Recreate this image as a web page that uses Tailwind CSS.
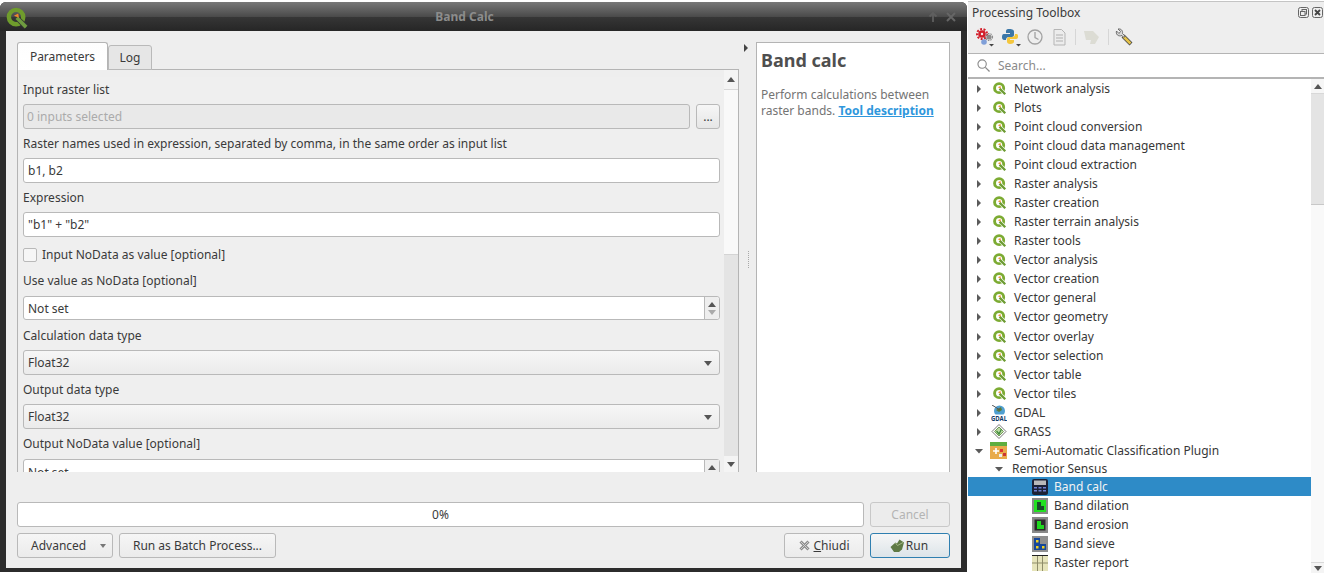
<!DOCTYPE html>
<html><head><script src="https://cdn.jsdelivr.net/npm/@tailwindcss/browser@4"></script></head>
<body class="w-[1324px] h-[573px] overflow-hidden bg-white font-['Noto_Sans',sans-serif] text-[12px] text-[#3a3a3a]">
<svg width="0" height="0" class="absolute"><defs>
  <symbol id="q" viewBox="0 0 16 16"><circle cx="7" cy="7" r="5.200" fill="none" stroke="#7cab32" stroke-width="3.300"/><path d="M7.500 7.500l6.500 6.500" stroke="#fff" stroke-width="4"/><path d="M7.500 7.500l6.500 6.500" stroke="#6d9c34" stroke-width="2.700"/><path d="M5.500 6l3-1.500.5 3z" fill="#f08a2c"/></symbol>
  <symbol id="a" viewBox="0 0 8 10"><path d="M2 1l4 4-4 4z" fill="#5a5a5a"/></symbol>
</defs></svg>
<div class="flex h-[573px]">
  <!-- Dialog window -->
  <div class="w-[967px] h-[573px] pt-[2px] shrink-0">
    <div class="h-[570px] flex flex-col bg-[#2c2c2c] rounded-t-[6px] overflow-hidden">
      <div class="h-[29px] shrink-0 relative flex items-center justify-center pr-[38px] bg-[linear-gradient(#787878,#494949_52%,#363636_52%,#262626)] font-bold text-[#8c8c8c]">
        <svg class="absolute left-[6px] top-[5px]" width="23" height="23" viewBox="0 0 16 16"><circle cx="7" cy="7" r="5" fill="none" stroke="#6f9c2c" stroke-width="3.100"/><path d="M7.500 7.500l6.500 6.500" stroke="#333" stroke-width="3.600"/><path d="M7.500 7.500l6.500 6.500" stroke="#6f9c40" stroke-width="2.500"/><path d="M5.500 6l3-1.500.5 3z" fill="#ef862b"/></svg>
        <span>Band Calc</span>
        <svg class="absolute left-[928px] top-[9px]" width="28" height="12" viewBox="0 0 28 12"><path d="M5 11V2M1.500 5.500L5 2l3.500 3.500" fill="none" stroke="#5f5f5f" stroke-width="1.800"/><path d="M19 2l8 8M27 2l-8 8" stroke="#666" stroke-width="2"/></svg>
      </div>
      <div class="mx-[6px] h-[537px] shrink-0 bg-[#eeeeee] pt-[11px] px-[11px] flex flex-col">
        <div class="flex h-[430px] shrink-0">
          <!-- left -->
          <div class="w-[722px] flex flex-col">
            <div class="flex h-[28px] items-end relative z-10">
              <div class="w-[91px] h-[28px] bg-[linear-gradient(#fdfdfd,#ffffff)] border border-[#b4b4b4] border-b-0 rounded-t-[3px] flex items-center justify-center">Parameters</div>
              <div class="w-[44px] h-[25px] bg-[#e6e6e6] border border-[#b9b9b9] rounded-t-[3px] flex items-center justify-center">Log</div>
            </div>
            <div class="h-[403px] -mt-[1px] border-x border-t border-[#b4b4b4] pt-[7px] pl-[1px] bg-[#eeeeee] flex">
              <div class="flex-1 min-w-0 pl-[4px] pr-[4px] overflow-hidden bg-[#efefef]">
                <div class="h-[27px] pb-[2px] flex items-center">Input raster list</div>
                <div class="flex gap-[6px] h-[25px]">
                  <div class="flex-1 border border-[#b9b9b9] rounded-[3px] bg-[#e9e9e9] text-[#ababab] pl-[3px] pt-[1px] flex items-center">0 inputs selected</div>
                  <div class="w-[24px] border border-[#b9b9b9] rounded-[3px] bg-gradient-to-b from-[#f6f6f6] to-[#e6e6e6] flex items-center justify-center">...</div>
                </div>
                <div class="h-[29px] flex items-center">Raster names used in expression, separated by comma, in the same order as input list</div>
                <div class="h-[25px] border border-[#b9b9b9] rounded-[3px] bg-white pl-[4px] pt-[1px] flex items-center">b1, b2</div>
                <div class="h-[29px] flex items-center">Expression</div>
                <div class="h-[25px] border border-[#b9b9b9] rounded-[3px] bg-white pl-[4px] pt-[1px] flex items-center">"b1" + "b2"</div>
                <div class="h-[33px] pt-[2px] flex items-center gap-[5px]"><span class="w-[14px] h-[14px] border border-[#b9b9b9] rounded-[2px] bg-[#f6f6f6]"></span><span>Input NoData as value [optional]</span></div>
                <div class="h-[26px] pb-[4px] flex items-center">Use value as NoData [optional]</div>
                <div class="h-[24px] pt-[1px] border border-[#b9b9b9] rounded-[3px] bg-white pl-[4px] flex items-center relative">Not set
                  <span class="absolute right-0 top-0 bottom-0 w-[15px] border-l border-[#b9b9b9] bg-[#eeeeee] rounded-r-[3px] flex flex-col items-center justify-center gap-[3px]"><span class="w-0 h-0 border-x-[4px] border-x-transparent border-b-[5px] border-b-[#555]"></span><span class="w-0 h-0 border-x-[4px] border-x-transparent border-t-[5px] border-t-[#aaa]"></span></span></div>
                <div class="h-[30px] pt-[2px] flex items-center">Calculation data type</div>
                <div class="h-[25px] border border-[#b9b9b9] rounded-[3px] bg-gradient-to-b from-[#f6f6f6] to-[#ebebeb] pl-[4px] flex items-center relative">Float32<span class="absolute right-[7px] top-[10px] w-0 h-0 border-x-[4px] border-x-transparent border-t-[5px] border-t-[#555]"></span></div>
                <div class="h-[29px] flex items-center">Output data type</div>
                <div class="h-[25px] border border-[#b9b9b9] rounded-[3px] bg-gradient-to-b from-[#f6f6f6] to-[#ebebeb] pl-[4px] flex items-center relative">Float32<span class="absolute right-[7px] top-[10px] w-0 h-0 border-x-[4px] border-x-transparent border-t-[5px] border-t-[#555]"></span></div>
                <div class="h-[30px] flex items-center">Output NoData value [optional]</div>
                <div class="h-[25px] pt-[2px] border border-[#b9b9b9] rounded-[3px] bg-white pl-[4px] flex items-center relative">Not set
                  <span class="absolute right-0 top-0 bottom-0 w-[15px] border-l border-[#b9b9b9] bg-[#eeeeee] flex flex-col items-center pt-[5px]"><span class="w-0 h-0 border-x-[4px] border-x-transparent border-b-[5px] border-b-[#555]"></span></span></div>
              </div>
              <div class="w-[14px] shrink-0 flex flex-col bg-[#e4e4e4] -mt-[7px]">
                <div class="h-[20px] bg-[#f4f4f4] border-b border-[#d8d8d8] flex items-center justify-center"><span class="w-0 h-0 border-x-[4px] border-x-transparent border-b-[5px] border-b-[#555]"></span></div>
                <div class="h-[165px] bg-[#f9f9f9] border-b border-[#d4d4d4]"></div>
                <div class="flex-1"></div>
                <div class="h-[16px] bg-[#f4f4f4] flex items-center justify-center"><span class="w-0 h-0 border-x-[4px] border-x-transparent border-t-[5px] border-t-[#555]"></span></div>
              </div>
            </div>
          </div>
          <!-- splitter -->
          <div class="w-[17px] shrink-0 relative">
            <span class="absolute left-[5px] top-[2px] w-0 h-0 border-y-[4px] border-y-transparent border-l-[4px] border-l-[#444]"></span>
            <span class="absolute left-[9px] top-[209px] h-[17px] border-l border-dotted border-[#a8a8a8]"></span>
          </div>
          <!-- help -->
          <div class="w-[194px] bg-white border-x border-t border-[#b4b4b4] pl-[4px] text-[#747474] leading-[16px]">
            <div class="text-[18px] font-bold text-[#4f4f4f] leading-[24px] mt-[5px] mb-[15px]">Band calc</div>
            <div>Perform calculations between raster bands. <a class="font-bold text-[#2f97dc] underline">Tool description</a></div>
          </div>
        </div>
        <div class="flex gap-[6px] mt-[30px] h-[25px] shrink-0">
          <div class="flex-1 border border-[#b9b9b9] rounded-[3px] bg-white flex items-center justify-center">0%</div>
          <div class="w-[80px] border border-[#c8c8c8] rounded-[3px] bg-[#ececec] text-[#b4b4b4] flex items-center justify-center">Cancel</div>
        </div>
        <div class="flex mt-[6px] h-[25px] shrink-0">
          <div class="w-[96px] border border-[#b9b9b9] rounded-[3px] bg-gradient-to-b from-[#f6f6f6] to-[#ebebeb] relative flex items-center pl-[13px]">Advanced<span class="absolute right-[6px] top-[10px] w-0 h-0 border-x-[3px] border-x-transparent border-t-[4px] border-t-[#777]"></span></div>
          <div class="w-[157px] ml-[6px] border border-[#b9b9b9] rounded-[3px] bg-gradient-to-b from-[#f6f6f6] to-[#ebebeb] flex items-center justify-center">Run as Batch Process...</div>
          <div class="flex-1"></div>
          <div class="w-[80px] border border-[#b9b9b9] rounded-[3px] bg-gradient-to-b from-[#f6f6f6] to-[#ebebeb] flex items-center justify-center gap-[4px]"><svg width="11" height="11" viewBox="0 0 11 11"><path d="M1.500 1.500l8 8M9.500 1.500l-8 8" stroke="#8c8c8c" stroke-width="3"/><path d="M1.500 1.500l8 8M9.500 1.500l-8 8" stroke="#cfcfcf" stroke-width="1"/></svg><span><span class="underline">C</span>hiudi</span></div>
          <div class="w-[80px] ml-[6px] pr-[2px] border border-[#2f7fb0] rounded-[3px] bg-gradient-to-b from-[#f6f6f6] to-[#dce4e9] flex items-center justify-center gap-[1px]"><svg width="15" height="14" viewBox="0 0 15 14"><path d="M.5 8l5-4.500 1.500 1 2.500-4 4.500 3-2 7-3 2.500H4z" fill="#5f7a45"/><path d="M5.500 4l2 2.500 5.500-3" stroke="#a4b985" fill="none"/></svg><span>Run</span></div>
        </div>
      </div>
    </div>
  </div>
  <div class="w-px shrink-0"></div>
  <!-- Toolbox -->
  <div class="flex-1 min-w-0 flex flex-col">
    <div class="h-[53px] shrink-0 border-t border-[#c4c4c4] mt-[1px] bg-[#eeeeee] border-b border-b-[#b4b4b4]">
    <div class="h-[22px] pl-[4px] flex items-center relative">Processing Toolbox
      <span class="absolute right-[1px] top-[5px] flex gap-[3px]">
        <svg width="11" height="11" viewBox="0 0 11 11"><rect x=".5" y=".5" width="10" height="10" rx="2" fill="none" stroke="#666"/><rect x="4" y="2.500" width="4.500" height="4.500" fill="none" stroke="#666"/><rect x="2.500" y="4.500" width="4.500" height="4" fill="#eee" stroke="#666"/></svg>
        <svg width="11" height="11" viewBox="0 0 11 11"><rect x=".5" y=".5" width="10" height="10" rx="2" fill="none" stroke="#666"/><path d="M3 3l5 5M8 3l-5 5" stroke="#444" stroke-width="1.800"/></svg>
      </span>
    </div>
    <div class="h-[26px] pl-[8px] flex items-center">
      <svg width="19" height="19" viewBox="0 0 19 19"><circle cx="6" cy="6" r="3.800" fill="#d21e2a"/><circle cx="6" cy="6" r="5" fill="none" stroke="#d21e2a" stroke-width="2" stroke-dasharray="2 1.500"/><circle cx="6" cy="6" r="1.200" fill="#eee"/><circle cx="13" cy="9" r="2.600" fill="#8c8c8c"/><circle cx="13" cy="9" r="3.500" fill="none" stroke="#8c8c8c" stroke-width="1.200" stroke-dasharray="1.500 1"/><circle cx="8" cy="14" r="2.800" fill="#7f9fd8"/><path d="M13 16h5l-2.500 2.500z" fill="#444"/></svg>
      <svg class="ml-[7px]" width="19" height="19" viewBox="0 0 19 19"><path d="M7 1C4 1 4 2.500 4 4v1h4v1H2C0 6 0 8 0 9.500S1 12 2 12h2c0-2 1-3 3-3h3c1 0 2-1 2-2V3.500C12 1.500 9 1 7 1z" fill="#3b77a8"/><path d="M8 16c3 0 4-1 4-2.500V12H8v-1h6c2 0 2-1.500 2-3s-.5-2-2-2h-1c0 2-1 3-3 3H7c-1 0-2 1-2 2v2.500C5 15 6 16 8 16z" fill="#f4c63c"/><path d="M14 16h5l-2.500 2.500z" fill="#444"/></svg>
      <svg class="ml-[6px]" width="16" height="16" viewBox="0 0 16 16"><circle cx="8" cy="8" r="7" fill="none" stroke="#a2a2a2" stroke-width="1.300"/><path d="M8 3v5.500l3.500 2" stroke="#a2a2a2" fill="none" stroke-width="1.300"/></svg>
      <svg class="ml-[10px]" width="13" height="17" viewBox="0 0 13 17"><path d="M1 .5h7.500L12 4v12H1z" fill="#ececec" stroke="#b5b5b5"/><path d="M3 6h7M3 9h7M3 12h7" stroke="#b0b0b0" stroke-width="1.200"/></svg>
      <span class="w-px h-[16px] bg-[#d6d6d6] ml-[9px]"></span>
      <svg class="ml-[8px]" width="15" height="15" viewBox="0 0 15 15"><path d="M0 1h9l6 6-4 7H6l1-4H2z" fill="#dcdcd4"/></svg>
      <span class="w-px h-[16px] bg-[#d6d6d6] ml-[9px]"></span>
      <svg class="ml-[6px]" width="18" height="18" viewBox="0 0 18 18"><path d="M8 8l8 8" stroke="#444" stroke-width="4"/><path d="M8.500 8.500l7 7" stroke="#e4c24a" stroke-width="2.500"/><path d="M3 1l2.500 2.500-1.500 2L1.500 3C.5 6 3 9 7 7.500L9 9.500 10 8 7.500 5.500C8 2.500 6 .5 3 1z" fill="#d8d8d8" stroke="#555" stroke-width=".8"/></svg>
    </div>
    </div>
    <div class="h-[25px] shrink-0 border-b-2 border-[#b4b4b4] bg-white flex items-center pl-[9px] gap-[8px] text-[#8a8a8a]">
      <svg width="13" height="13" viewBox="0 0 14 14"><circle cx="5.500" cy="5.500" r="4.500" fill="none" stroke="#8a8a8a" stroke-width="1.200"/><path d="M9 9l4.500 4.500" stroke="#8a8a8a" stroke-width="1.400"/></svg>
      <span>Search...</span>
    </div>
    <div class="flex-1 min-h-0 bg-white flex overflow-hidden">
      <div class="flex-1 min-w-0 text-[#383838]">
        <div class="h-[19px] flex items-center pl-[7px]"><svg width="8" height="10"><use href="#a"/></svg><svg class="ml-[10px] mr-[7px]" width="14" height="14"><use href="#q"/></svg>Network analysis</div>
        <div class="h-[19px] flex items-center pl-[7px]"><svg width="8" height="10"><use href="#a"/></svg><svg class="ml-[10px] mr-[7px]" width="14" height="14"><use href="#q"/></svg>Plots</div>
        <div class="h-[19px] flex items-center pl-[7px]"><svg width="8" height="10"><use href="#a"/></svg><svg class="ml-[10px] mr-[7px]" width="14" height="14"><use href="#q"/></svg>Point cloud conversion</div>
        <div class="h-[19px] flex items-center pl-[7px]"><svg width="8" height="10"><use href="#a"/></svg><svg class="ml-[10px] mr-[7px]" width="14" height="14"><use href="#q"/></svg>Point cloud data management</div>
        <div class="h-[19px] flex items-center pl-[7px]"><svg width="8" height="10"><use href="#a"/></svg><svg class="ml-[10px] mr-[7px]" width="14" height="14"><use href="#q"/></svg>Point cloud extraction</div>
        <div class="h-[19px] flex items-center pl-[7px]"><svg width="8" height="10"><use href="#a"/></svg><svg class="ml-[10px] mr-[7px]" width="14" height="14"><use href="#q"/></svg>Raster analysis</div>
        <div class="h-[19px] flex items-center pl-[7px]"><svg width="8" height="10"><use href="#a"/></svg><svg class="ml-[10px] mr-[7px]" width="14" height="14"><use href="#q"/></svg>Raster creation</div>
        <div class="h-[19px] flex items-center pl-[7px]"><svg width="8" height="10"><use href="#a"/></svg><svg class="ml-[10px] mr-[7px]" width="14" height="14"><use href="#q"/></svg>Raster terrain analysis</div>
        <div class="h-[19px] flex items-center pl-[7px]"><svg width="8" height="10"><use href="#a"/></svg><svg class="ml-[10px] mr-[7px]" width="14" height="14"><use href="#q"/></svg>Raster tools</div>
        <div class="h-[19px] flex items-center pl-[7px]"><svg width="8" height="10"><use href="#a"/></svg><svg class="ml-[10px] mr-[7px]" width="14" height="14"><use href="#q"/></svg>Vector analysis</div>
        <div class="h-[19px] flex items-center pl-[7px]"><svg width="8" height="10"><use href="#a"/></svg><svg class="ml-[10px] mr-[7px]" width="14" height="14"><use href="#q"/></svg>Vector creation</div>
        <div class="h-[19px] flex items-center pl-[7px]"><svg width="8" height="10"><use href="#a"/></svg><svg class="ml-[10px] mr-[7px]" width="14" height="14"><use href="#q"/></svg>Vector general</div>
        <div class="h-[20px] flex items-center pl-[7px]"><svg width="8" height="10"><use href="#a"/></svg><svg class="ml-[10px] mr-[7px]" width="14" height="14"><use href="#q"/></svg>Vector geometry</div>
        <div class="h-[19px] flex items-center pl-[7px]"><svg width="8" height="10"><use href="#a"/></svg><svg class="ml-[10px] mr-[7px]" width="14" height="14"><use href="#q"/></svg>Vector overlay</div>
        <div class="h-[19px] flex items-center pl-[7px]"><svg width="8" height="10"><use href="#a"/></svg><svg class="ml-[10px] mr-[7px]" width="14" height="14"><use href="#q"/></svg>Vector selection</div>
        <div class="h-[19px] flex items-center pl-[7px]"><svg width="8" height="10"><use href="#a"/></svg><svg class="ml-[10px] mr-[7px]" width="14" height="14"><use href="#q"/></svg>Vector table</div>
        <div class="h-[19px] flex items-center pl-[7px]"><svg width="8" height="10"><use href="#a"/></svg><svg class="ml-[10px] mr-[7px]" width="14" height="14"><use href="#q"/></svg>Vector tiles</div>
        <div class="h-[19px] flex items-center pl-[7px]"><svg width="8" height="10"><use href="#a"/></svg><svg class="ml-[8px] mr-[7px]" width="16" height="16" viewBox="0 0 16 16"><circle cx="8.500" cy="6" r="5.500" fill="#4f9fd0"/><path d="M5 5l5-3 1 3-3 2z" fill="#5b7a3a"/><path d="M1 0l8 5" stroke="#555"/><rect x="0" y="9.500" width="16" height="6.500" fill="#fff"/><text x="0" y="15.500" font-size="6.500" font-weight="700" fill="#123a66" textLength="16" lengthAdjust="spacingAndGlyphs">GDAL</text></svg>GDAL</div>
        <div class="h-[19px] flex items-center pl-[7px]"><svg width="8" height="10"><use href="#a"/></svg><svg class="ml-[8px] mr-[7px]" width="16" height="16" viewBox="0 0 16 16"><path d="M8 .5l7 7-7 7-7-7z" fill="#fff" stroke="#777"/><path d="M8 3l4.500 4.500L8 12 3.500 7.500z" fill="#bcd9a4" stroke="#6f9a55"/><path d="M5.500 7L8 10l2.500-5" fill="none" stroke="#3f8a3a" stroke-width="1.300"/></svg>GRASS</div>
        <div class="h-[19px] flex items-center pl-[7px]"><svg width="8" height="10" viewBox="0 0 8 10"><path d="M0 3h8L4 7.500z" fill="#5a5a5a"/></svg><svg class="ml-[7px] mr-[7px]" width="17" height="17" viewBox="0 0 17 17"><rect width="17" height="17" fill="#e8ab4c"/><rect width="17" height="4" fill="#5fae3f"/><path d="M3 9h6M6 6v6" stroke="#fff" stroke-width="1.600"/><rect x="10" y="7" width="3" height="3" fill="#d33"/><rect x="13" y="11" width="3" height="3" fill="#c33"/><rect x="9" y="12" width="3" height="3" fill="#eee"/></svg>Semi-Automatic Classification Plugin</div>
        <div class="h-[17px] flex items-center pl-[27px]"><svg class="mr-[9px]" width="8" height="10" viewBox="0 0 8 10"><path d="M0 3h8L4 7.500z" fill="#5a5a5a"/></svg>Remotior Sensus</div>
        <div class="h-[19px] flex items-center pl-[64px] bg-[#2e8bc7] text-[#f2f2f2]"><svg class="mr-[6px]" width="16" height="16" viewBox="0 0 16 16"><rect width="16" height="16" rx="2" fill="#1c2236"/><rect x="2" y="1.500" width="12" height="4.500" fill="#b9b9b9"/><rect x="2" y="8" width="3" height="1.500" fill="#6e7fd0"/><rect x="6.500" y="8" width="3" height="1.500" fill="#6e7fd0"/><rect x="11" y="8" width="3" height="1.500" fill="#6e7fd0"/><rect x="2" y="11" width="3" height="1.500" fill="#6e7fd0"/><rect x="6.500" y="11" width="3" height="1.500" fill="#6e7fd0"/><rect x="11" y="11" width="3" height="1.500" fill="#6e7fd0"/></svg>Band calc</div>
        <div class="h-[19px] flex items-center pl-[64px]"><svg class="mr-[6px]" width="16" height="16" viewBox="0 0 16 16"><rect width="16" height="16" fill="#8a8a8a"/><rect x="2" y="2" width="12" height="12" fill="#22e022"/><path d="M5 4h4v4h3v4H5z" fill="#1a4a2a"/></svg>Band dilation</div>
        <div class="h-[19px] flex items-center pl-[64px]"><svg class="mr-[6px]" width="16" height="16" viewBox="0 0 16 16"><rect width="16" height="16" fill="#8a8a8a"/><rect x="2.500" y="2.500" width="11" height="11" fill="#2a2a2a"/><path d="M5 4h4v4h3v4H5z" fill="#1fd81f"/></svg>Band erosion</div>
        <div class="h-[19px] flex items-center pl-[64px]"><svg class="mr-[6px]" width="16" height="16" viewBox="0 0 16 16"><rect width="16" height="16" fill="#8f8f8f"/><path d="M2 2h6v6h6v6H2z" fill="#16479a"/><rect x="4" y="4" width="2.500" height="2.500" fill="#f0d020"/><rect x="4" y="10" width="2.500" height="2.500" fill="#f0d020"/><rect x="10" y="10" width="2.500" height="2.500" fill="#f0d020"/></svg>Band sieve</div>
        <div class="h-[19px] flex items-center pl-[64px]"><svg class="mr-[6px]" width="16" height="16" viewBox="0 0 16 16"><rect width="16" height="16" fill="#e6e4ba"/><path d="M0 .5h16" stroke="#222"/><path d="M0 8h16M5.500 1v15M10.500 1v15" stroke="#8f8d6a"/></svg>Raster report</div>
      </div>
      <div class="w-[13px] shrink-0 flex flex-col bg-[#f9f9f9]">
        <div class="h-[15px] bg-[#f6f6f6] flex items-center justify-center border-b border-[#d8d8d8]"><span class="w-0 h-0 border-x-[4px] border-x-transparent border-b-[5px] border-b-[#555]"></span></div>
        <div class="h-[111px] bg-[#e4e4e4] border-b border-[#c8c8c8]"></div>
        <div class="flex-1"></div>
        <div class="h-[11px] bg-[#f4f4f4] flex items-start justify-center pt-[3px] border-t border-[#d8d8d8]"><span class="w-0 h-0 border-x-[4px] border-x-transparent border-t-[5px] border-t-[#555]"></span></div>
      </div>
    </div>
  </div>
</div>
</body></html>
